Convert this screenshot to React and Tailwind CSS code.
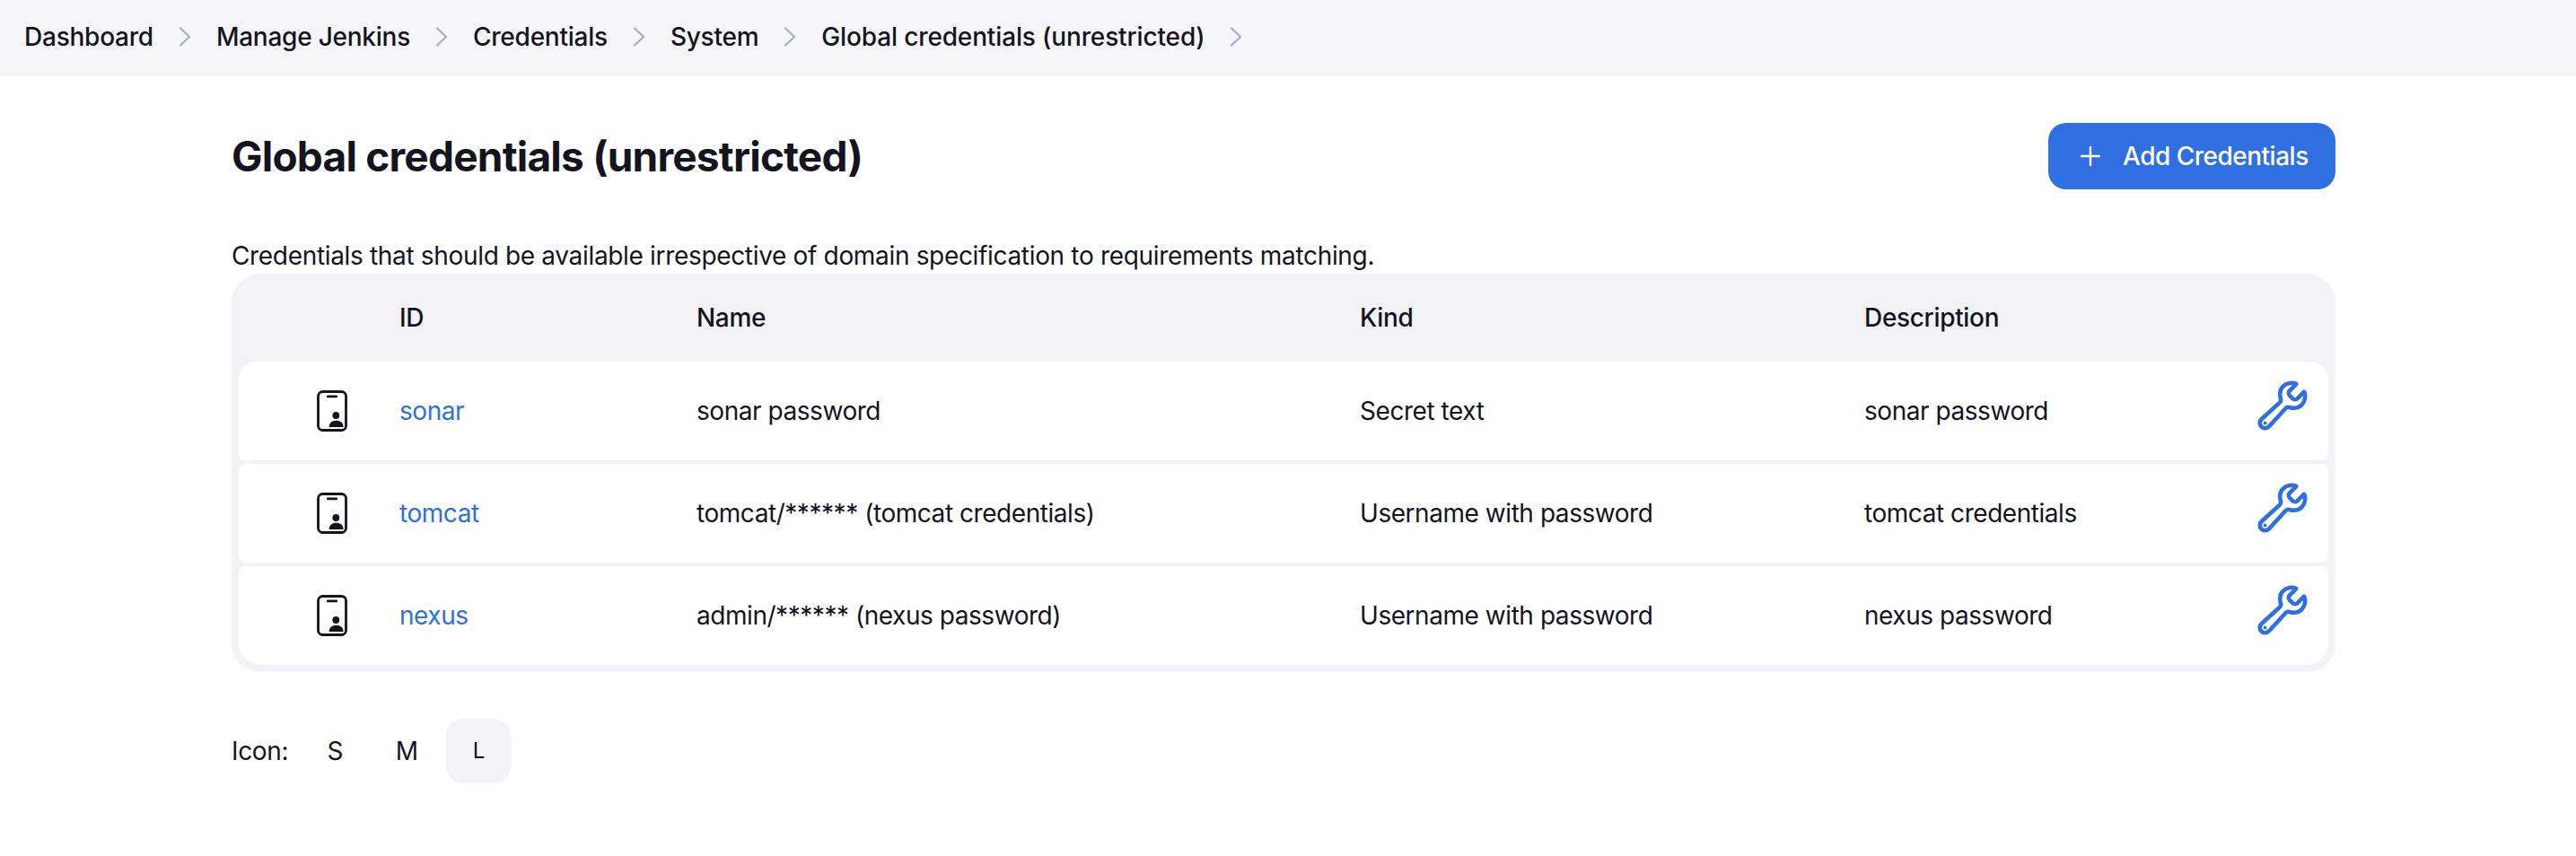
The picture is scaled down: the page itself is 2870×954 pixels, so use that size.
import React from "react";
import { IoBuildOutline } from "react-icons/io5";

const CRUMBS = ["Dashboard", "Manage Jenkins", "Credentials", "System", "Global credentials (unrestricted)"];

const ROWS = [
  { id: "sonar", name: "sonar password", kind: "Secret text", description: "sonar password", corners: "rounded-t-[20px] rounded-b-[8px]" },
  { id: "tomcat", name: "tomcat/****** (tomcat credentials)", kind: "Username with password", description: "tomcat credentials", corners: "rounded-[8px]" },
  { id: "nexus", name: "admin/****** (nexus password)", kind: "Username with password", description: "nexus password", corners: "rounded-t-[8px] rounded-b-[24px]" },
];

function Chevron() {
  return (
    <svg width="14" height="22" viewBox="0 0 14 22" fill="none" className="text-[#a3b1cc]">
      <path d="M2 1.5 L12 11 L2 20.5" stroke="currentColor" strokeWidth="2.4" strokeLinecap="round" strokeLinejoin="round" />
    </svg>
  );
}

function DeviceIcon() {
  return (
    <svg width="34" height="46" viewBox="0 0 34 46" fill="none" className="text-[#14141f]">
      <rect x="1.5" y="1.5" width="31" height="43" rx="5" stroke="currentColor" strokeWidth="2.8" />
      <rect x="11" y="5.5" width="12" height="2.8" rx="1" fill="currentColor" />
      <circle cx="21.3" cy="28" r="3.9" fill="currentColor" />
      <path d="M13.6 41 C13.6 36 17.2 33.8 21.6 33.8 C26 33.8 29.6 36 29.6 41 Z" fill="currentColor" />
    </svg>
  );
}

export default function App() {
  return (
    <div className="min-h-[954px] bg-white text-[#14141f] font-['Inter',sans-serif] text-[28px] tracking-[-0.33px]">
      <div className="flex h-[85px] items-center gap-[28px] bg-[#f6f6f8] pb-[3px] pl-[27px] font-medium tracking-[-0.24px]">
        {CRUMBS.map((c, i) => (
          <React.Fragment key={c}>
            <span className={i === 4 ? "tracking-[-0.14px]" : ""}>{c}</span>
            <Chevron />
          </React.Fragment>
        ))}
      </div>

      <div className="ml-[258px] w-[2344px]">
        <div className="mt-[52px] flex h-[74px] items-center justify-between">
          <h1 className="text-[46px] font-bold tracking-[-0.78px]">Global credentials (unrestricted)</h1>
          <button className="flex h-[74px] w-[320px] items-center gap-[25px] rounded-[20px] bg-[#2f6fdf] pl-[36px] font-medium tracking-[-0.5px] text-white">
            <svg width="22" height="22" viewBox="0 0 22 22" fill="none">
              <path d="M11 1 V21 M1 11 H21" stroke="currentColor" strokeWidth="2.4" strokeLinecap="round" />
            </svg>
            Add Credentials
          </button>
        </div>

        <p className="mt-[54px] leading-[40px]">Credentials that should be available irrespective of domain specification to requirements matching.</p>

        <div className="rounded-[32px] bg-[#f2f2f7] px-[8px] pb-[8px] font-medium">
          <div className="flex h-[98px] items-center">
            <div className="w-[179px]" />
            <div className="w-[331px]">ID</div>
            <div className="w-[739px]">Name</div>
            <div className="w-[562px]">Kind</div>
            <div>Description</div>
          </div>
          <div className="flex flex-col gap-[4px] font-normal tracking-[-0.45px]">
            {ROWS.map((r) => (
              <div key={r.id} className={`flex h-[110px] items-center bg-white ${r.corners}`}>
                <div className="flex w-[179px] justify-center pl-[29px]">
                  <DeviceIcon />
                </div>
                <div className="w-[331px]">
                  <a href="#" className="text-[#2f6fdf]">{r.id}</a>
                </div>
                <div className="w-[739px]">{r.name}</div>
                <div className="w-[562px]">{r.kind}</div>
                <div className="flex-1">{r.description}</div>
                <div className="mr-[20px] mb-[12px] text-[#2f6fdf]">
                  <IoBuildOutline size={62} className="[&_path]:[stroke-width:38px]" />
                </div>
              </div>
            ))}
          </div>
        </div>

        <div className="mt-[52px] flex items-center">
          <span className="mr-[16px]">Icon:</span>
          <div className="flex h-[72px] w-[72px] items-center justify-center">S</div>
          <div className="ml-[8px] flex h-[72px] w-[72px] items-center justify-center">M</div>
          <div className="ml-[8px] flex h-[72px] w-[72px] items-center justify-center rounded-[20px] bg-[#f2f2f7] text-[24px]">L</div>
        </div>
      </div>
    </div>
  );
}
